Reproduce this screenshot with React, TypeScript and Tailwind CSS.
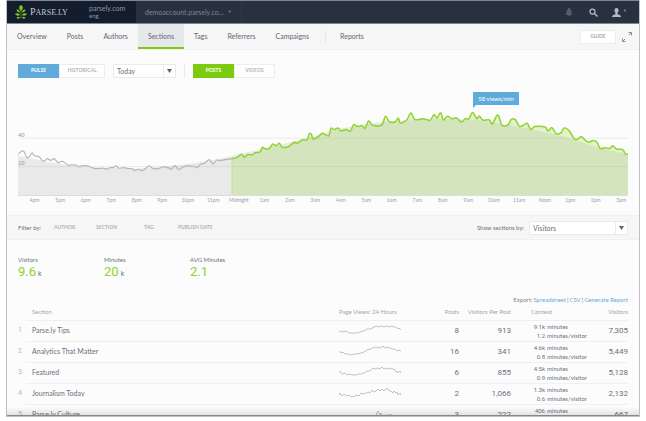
import React from "react";

type Point = [number, number];

const pastLine: Point[] = [
  [0, 222], [12, 212], [19, 215], [26, 232], [34, 229], [42, 217], [49, 226], [63, 229], [74, 242], [81, 241],
  [88, 235], [98, 240], [109, 235], [120, 247], [133, 243], [150, 254], [166, 254], [176, 255], [184, 259],
  [196, 256], [208, 257], [231, 265], [256, 264], [267, 267], [276, 262], [286, 262], [294, 257], [303, 264],
  [316, 262], [331, 265], [341, 265], [350, 271], [361, 267], [374, 271], [393, 257], [404, 265], [421, 265],
  [436, 260], [450, 262], [461, 267], [471, 256], [482, 268], [496, 260], [511, 257], [526, 258], [538, 262],
  [548, 252], [561, 248], [573, 238], [585, 251], [596, 240], [608, 241], [621, 238], [642, 235],
];

const todayLine: Point[] = [
  [642, 235], [656, 232], [670, 222], [680, 231], [688, 223], [704, 223], [711, 217], [726, 215], [733, 201],
  [741, 205], [754, 204], [764, 191], [774, 196], [784, 188], [792, 200], [811, 199], [828, 186], [838, 188],
  [854, 178], [868, 178], [873, 160], [880, 161], [886, 176], [901, 168], [914, 158], [932, 166], [939, 143],
  [948, 147], [960, 142], [969, 151], [984, 147], [997, 152], [1007, 132], [1019, 138], [1032, 135], [1041, 143],
  [1052, 121], [1064, 134], [1091, 133], [1102, 107], [1114, 123], [1131, 124], [1141, 112], [1147, 127],
  [1166, 118], [1179, 97], [1191, 117], [1216, 114], [1236, 119], [1248, 102], [1257, 112], [1268, 96],
  [1276, 118], [1288, 107], [1302, 114], [1316, 112], [1330, 124], [1342, 114], [1352, 115], [1364, 95],
  [1376, 114], [1384, 106], [1394, 118], [1414, 118], [1423, 130], [1436, 105], [1443, 108], [1452, 134],
  [1470, 133], [1480, 116], [1492, 117], [1504, 137], [1516, 134], [1528, 128], [1538, 147], [1551, 138],
  [1581, 139], [1590, 151], [1602, 141], [1614, 159], [1630, 156], [1638, 142], [1654, 151], [1668, 174],
  [1678, 177], [1690, 169], [1710, 185], [1724, 180], [1736, 184], [1747, 204], [1761, 202], [1776, 204],
  [1784, 196], [1796, 206], [1814, 208], [1822, 221], [1830, 221],
];

const averageLine: Point[] = [
  [0, 226], [66, 240], [146, 254], [246, 262], [366, 264], [496, 253], [586, 238], [642, 227], [726, 207],
  [876, 170], [976, 142], [1076, 126], [1176, 117], [1236, 115], [1364, 117], [1476, 134], [1556, 150],
  [1656, 173], [1736, 200], [1830, 222],
];

/* Catmull-Rom spline through the samples, written as cubic segments. */
const curve = (pts: Point[]) =>
  pts
    .map(([x, y], i) => {
      if (i === 0) return `M${x},${y}`;
      const a = pts[Math.max(i - 2, 0)];
      const b = pts[i - 1];
      const d = pts[Math.min(i + 1, pts.length - 1)];
      const c1 = `${b[0] + (x - a[0]) / 6},${b[1] + (y - a[1]) / 6}`;
      const c2 = `${x - (d[0] - b[0]) / 6},${y - (d[1] - b[1]) / 6}`;
      return `C${c1} ${c2} ${x},${y}`;
    })
    .join(" ");

const hours = [
  "4pm", "5pm", "6pm", "7pm", "8pm", "9pm", "10pm", "11pm", "Midnight", "1am", "2am", "3am",
  "4am", "5am", "6am", "7am", "8am", "9am", "10am", "11am", "Noon", "1pm", "2pm", "3pm",
];

const tabs = ["Overview", "Posts", "Authors", "Sections", "Tags", "Referrers", "Campaigns"];

const stats = [
  { label: "Visitors", value: "9.6", unit: "k" },
  { label: "Minutes", value: "20", unit: "k" },
  { label: "AVG Minutes", value: "2.1", unit: "" },
];

const rows = [
  { name: "Parse.ly Tips", posts: "8", per: "913", minutes: "9.1k", each: "1.2", visitors: "7,305",
    spark: "M0,10 3,11 7,10 10,12 14,12 18,12 21,11 25,10 28,8 32,8 35,6 38,5 40,6 42,5 45,6 48,5 51,6 53,5 55,6 57,6 59,8 60,7 62,9" },
  { name: "Analytics That Matter", posts: "16", per: "341", minutes: "4.6k", each: "0.8", visitors: "5,449",
    spark: "M0,9 2,11 4,10 6,12 9,12 12,13 15,12 18,12 22,11 25,10 28,8 32,7 35,5 37,6 39,5 42,6 44,4 46,6 48,5 51,6 53,7 56,7 58,9 60,8 62,9" },
  { name: "Featured", posts: "6", per: "855", minutes: "4.5k", each: "0.9", visitors: "5,128",
    spark: "M0,9 1,8 3,11 6,10 8,12 11,11 13,12 17,12 19,11 22,11 25,10 28,8 31,8 34,5 36,6 38,5 41,6 43,4 45,6 47,5 49,6 51,5 53,6 55,6 57,9 58,8 59,10 61,8 62,10" },
  { name: "Journalism Today", posts: "2", per: "1,066", minutes: "1.3k", each: "0.6", visitors: "2,132",
    spark: "M0,11 1,9 3,12 5,10 7,12 10,11 12,13 14,12 15,13 17,11 20,12 22,9 24,10 27,9 29,8 31,9 33,6 35,8 37,7 39,5 41,7 43,5 45,7 47,5 48,4 50,7 52,7 54,9 55,7 57,9 58,8 59,11 61,9 62,11" },
  { name: "Parse.ly Culture", posts: "3", per: "222", minutes: "406", each: "0.6", visitors: "667",
    spark: "M24,13 26,12 27,13 29,11 31,12 33,11 34,13 36,10 37,12 38,7 39,6 41,10 42,8 44,12 46,10 48,11 49,9 50,12 52,9 53,13 55,11 57,13 59,12 61,13" },
];

function LeafLogo() {
  return (
    <svg className="h-3.5 w-3" viewBox="0 0 24 28" fill="#7cc31f" aria-hidden="true">
      <path d="M12 8v19" stroke="#5f9a1c" strokeWidth="1.500" />
      <path d="M12 0c5 3 5 8 0 12-5-4-5-9 0-12z" />
      <path d="M10 15c-4 0-7-2-7-6 4-1 7 2 7 6zM14 15c4 0 7-2 7-6-4-1-7 2-7 6z" />
      <path d="M10 20c-4 3-8 1-10-2 4-3 8-2 10 2zM14 20c4 3 8 1 10-2-4-3-8-2-10 2z" />
      <path d="M10 25c-2 3-5 3-7 1 2-3 5-3 7-1zM14 25c2 3 5 3 7 1-2-3-5-3-7-1z" />
    </svg>
  );
}

function Caret() {
  return (
    <svg className="h-1 w-[5px]" viewBox="0 0 5 4" fill="#5b6270" aria-hidden="true">
      <path d="M0 0h5L2.500 4z" />
    </svg>
  );
}

function Picker({ id, label, value, options, size }: { id: string; label: string; value: string; options: string[]; size: string }) {
  return (
    <div className={`relative h-[14px] border border-[#e9eaec] bg-white ${size}`}>
      <select
        id={id}
        aria-label={label}
        defaultValue={value}
        className="block h-full w-full appearance-none bg-transparent pl-[3px] text-[7px] leading-3 text-[#6a7280] outline-none"
      >
        {options.map((o) => (
          <option key={o}>{o}</option>
        ))}
      </select>
      <span className="pointer-events-none absolute inset-y-0 right-0 flex w-3 items-center justify-center border-l border-[#e9eaec]">
        <Caret />
      </span>
    </div>
  );
}

function Header() {
  return (
    <header className="flex h-6 shrink-0 border-y border-[#7f8790] bg-[#28313f] text-[#8d95a1]">
      <div className="flex w-[129px] items-center bg-[#131d2d] pl-2">
        <LeafLogo />
        <span className="ml-[3px] w-[59px] font-['Liberation_Serif',serif] text-[10px] leading-none text-[#c3c8cf]">
          P<span className="text-[8px]">ARSE.LY</span>
        </span>
        <span className="text-[7px] leading-[7px]">
          parsely.com
          <br />
          <span className="text-[6px]">eng</span>
        </span>
      </div>
      <button className="flex w-[106px] items-center border-r border-[#303947] pl-[9px] text-[7px] text-[#7d8693]">
        demoaccount.parsely.co...
        <span className="ml-1 text-[4px]">▼</span>
      </button>
      <div className="ml-auto flex items-center pr-3">
        <button aria-label="Alerts" className="mr-4">
          <svg className="h-2 w-2" viewBox="0 0 16 16" fill="#535d6a">
            <path d="M8 0c1 0 2 1 2 2 2 1 3 3 3 6v3l2 2v1H1v-1l2-2V8c0-3 1-5 3-6 0-1 1-2 2-2zM6 14h4c0 3-4 3-4 0z" />
          </svg>
        </button>
        <button aria-label="Search" className="mr-3.5">
          <svg className="h-[9px] w-[9px]" viewBox="0 0 18 18" fill="none" stroke="#b4bac2" strokeWidth="2.500">
            <circle cx="7" cy="7" r="5" />
            <path d="M11 11l6 6" strokeWidth="3" />
          </svg>
        </button>
        <button aria-label="Account" className="flex items-center gap-[2px]">
          <svg className="h-[9px] w-[9px]" viewBox="0 0 18 18" fill="#b4bac2">
            <path d="M9 0c3 0 4 2 4 5 0 2-1 4-2 5v2c3 1 6 2 7 5v1H0v-1c1-3 4-4 7-5v-2C6 9 5 7 5 5c0-3 1-5 4-5z" />
          </svg>
          <span className="mb-[2px] text-[4px] leading-none">▼</span>
        </button>
      </div>
    </header>
  );
}

function Nav() {
  return (
    <nav className="flex h-[26px] shrink-0 items-stretch border-b border-[#f0f0f1] bg-[#f6f6f7] text-[7px] text-[#5f6775]">
      {tabs.map((t) => (
        <a
          key={t}
          href="#"
          className={`flex items-center border-b-2 px-[10px] pt-[2px] ${
            t === "Sections" ? "border-[#7ccb0e] bg-[#e7e8ec]" : "border-transparent"
          }`}
        >
          {t}
        </a>
      ))}
      <span className="my-1.5 ml-1.5 w-px bg-[#e6e7e9]" />
      <a href="#" className="ml-1 flex items-center border-b-2 border-transparent px-[10px] pt-[2px]">
        Reports
      </a>
      <button className="my-auto ml-auto h-[14px] w-9 border border-[#eaebec] bg-white text-[5px] font-bold text-[#a3aab4]">
        GUIDE
      </button>
      <button aria-label="Full screen" className="mr-[7px] ml-1.5">
        <svg className="h-2.5 w-2.5" viewBox="0 0 20 20" fill="none" stroke="#8b919b" strokeWidth="2">
          <path d="M13 1h6v6M19 1l-5 5M7 19H1v-6M1 19l5-5" />
        </svg>
      </button>
    </nav>
  );
}

function Controls() {
  const base = "h-[14px] text-[5px] font-bold";
  const off = "border border-[#eceded] bg-white text-[#b0b5bd]";
  return (
    <div className="flex items-center px-[11px] pt-[14px]">
      <button className={`${base} w-[41px] bg-[#5fabdc] text-white`}>PULSE</button>
      <button className={`${base} ${off} w-[46px]`}>HISTORICAL</button>
      <div className="ml-2">
        <Picker id="period" label="Period" value="Today" options={["Today", "Yesterday"]} size="w-[63px]" />
      </div>
      <span className="mx-2 h-[14px] w-px bg-[#e9eaeb]" />
      <button className={`${base} w-[41px] bg-[#7ccb0e] text-white`}>POSTS</button>
      <button className={`${base} ${off} w-[41px]`}>VIDEOS</button>
    </div>
  );
}

function Chart() {
  const end = " L1830,345";
  return (
    <section aria-label="Views per minute" className="px-[11px] pt-[3px]">
      <div className="relative h-[115px] border-b border-[#dcdddf]">
        <svg className="block h-full w-full" viewBox="0 0 1830 345" preserveAspectRatio="none" fill="none">
          <path d={`${curve(averageLine)}${end} L0,345Z`} fill="#e9e9e9" />
          <path d={`${curve(todayLine)}${end} L642,345Z`} fill="#9fdb4a" fillOpacity="0.28" />
          <path d="M0,173H1830M0,259H1830" stroke="#9aa39a" strokeOpacity="0.18" strokeWidth="3" />
          <path d="M642,235V345" stroke="#c5e09b" strokeWidth="3" />
          <path d={curve(pastLine)} stroke="#b3b6ba" strokeWidth="3.500" />
          <path d={curve(todayLine)} stroke="#8fd32f" strokeWidth="4.500" />
        </svg>
        <span className="absolute top-[50px] left-0 font-[Roboto] text-[6px] leading-2 text-[#989eaa]">40</span>
        <span className="absolute top-[78px] left-0 font-[Roboto] text-[6px] leading-2 text-[#989eaa]">20</span>
        <div className="absolute top-[11px] left-[74.600%] flex h-[13px] w-[46px] items-center justify-center bg-[#5fabdc] text-[6px] text-white">
          58 views/min
          <svg className="absolute top-full left-0 h-[3px] w-[3px]" viewBox="0 0 3 3" fill="#5fabdc">
            <path d="M0 0h3L0 3z" />
          </svg>
        </div>
      </div>
      <div className="-mr-1.5 ml-1 grid grid-cols-24 text-[5px] leading-2 text-[#989eaa]">
        {hours.map((h) => (
          <span key={h} className="flex justify-center">
            {h}
          </span>
        ))}
      </div>
    </section>
  );
}

function Filters() {
  return (
    <div className="mt-[11px] flex h-[25px] items-center border-y border-[#f1f1f2] bg-[#f6f6f6] px-[11px] text-[#6a7280]">
      <span className="w-9 text-[6px]">Filter by:</span>
      <div className="flex gap-[21px] text-[5px] font-bold text-[#aeb3bb]">
        <button className="w-[21px] text-left">AUTHOR</button>
        <button className="w-[27px] text-left">SECTION</button>
        <button className="w-[13px] text-left">TAG</button>
        <button>PUBLISH DATE</button>
      </div>
      <label htmlFor="metric" className="mr-[5px] ml-auto text-[6px]">
        Show sections by:
      </label>
      <Picker id="metric" label="Show sections by" value="Visitors" options={["Visitors", "Minutes", "Posts"]} size="w-[99px]" />
    </div>
  );
}

function Stats() {
  return (
    <div className="flex px-[11px] pt-4">
      {stats.map((s) => (
        <div key={s.label} className="w-[86px]">
          <div className="text-[6px] leading-2 text-[#6a7280]">{s.label}</div>
          <div className="font-[Roboto] text-[13px] leading-4 text-[#8fd32f]">
            {s.value}
            {s.unit && <span className="ml-[2px] text-[7px] text-[#6a7280]">{s.unit}</span>}
          </div>
        </div>
      ))}
    </div>
  );
}

function Sections() {
  const line = "border-b border-[#f0f0f1]";
  const num = `${line} text-right font-[Roboto] text-[8px] leading-none`;
  return (
    <section className="px-[11px] pt-[14px]">
      <div className="flex justify-end gap-px text-[6px] leading-2 text-[#7d8490]">
        Export:
        <a href="#" className="text-[#5fabdc]">Spreadsheet</a>|
        <a href="#" className="text-[#5fabdc]">CSV</a>|
        <a href="#" className="text-[#5fabdc]">Generate Report</a>
      </div>
      <table className="w-full table-fixed border-collapse text-[#687080]">
        <thead>
          <tr className="h-4 text-[6px] text-[#a0a6b0]">
            <th className="w-2" />
            <th className={`${line} pl-1.5 text-left font-normal`}>Section</th>
            <th className={`${line} w-[72px] text-left font-normal`}>Page Views: 24 Hours</th>
            <th className={`${line} w-12 text-right font-normal`}>Posts</th>
            <th className={`${line} w-[52px] text-right font-normal`}>Visitors Per Post</th>
            <th className={`${line} w-[77px] pl-5 text-left font-normal`}>Context</th>
            <th className={`${line} w-10 text-right font-normal`}>Visitors</th>
          </tr>
        </thead>
        <tbody>
          {rows.map((r, i) => (
            <tr key={r.name} className="h-[21px]">
              <td className="font-[Roboto] text-[7px] leading-none text-[#b3b8c0]">{i + 1}</td>
              <td className={`${line} pl-1.5 text-[7px] leading-none`}>{r.name}</td>
              <td className={`${line} pb-[3px]`}>
                <svg className="block h-4 w-[62px]" viewBox="0 0 62 16" fill="none" stroke="#bfc2c6" strokeWidth="1">
                  <path d={r.spark} />
                </svg>
              </td>
              <td className={num}>{r.posts}</td>
              <td className={num}>{r.per}</td>
              <td className={`${line} pl-5`}>
                <div className="grid grid-cols-[14px_auto] gap-x-[2px] text-[6px] leading-[9px] whitespace-nowrap">
                  <span className="text-right font-[Roboto]">{r.minutes}</span>
                  <span>minutes</span>
                  <span className="text-right font-[Roboto]">{r.each}</span>
                  <span>minutes/visitor</span>
                </div>
              </td>
              <td className={num}>{r.visitors}</td>
            </tr>
          ))}
        </tbody>
      </table>
    </section>
  );
}

export default function App() {
  return (
    <div className="h-screen overflow-hidden bg-white px-[7px] pb-[5px] font-[Lato,sans-serif]">
      <div className="relative flex h-full flex-col overflow-hidden border-b border-[#85888b] bg-[#fcfcfc] shadow-[0_0_0_1px_#bfc1c2]">
        <Header />
        <Nav />
        <main className="min-h-0 flex-1 overflow-hidden">
          <Controls />
          <Chart />
          <Filters />
          <Stats />
          <Sections />
        </main>
        <div className="pointer-events-none absolute inset-x-0 bottom-0 h-2 bg-linear-to-t from-black/10 to-transparent" />
      </div>
    </div>
  );
}
